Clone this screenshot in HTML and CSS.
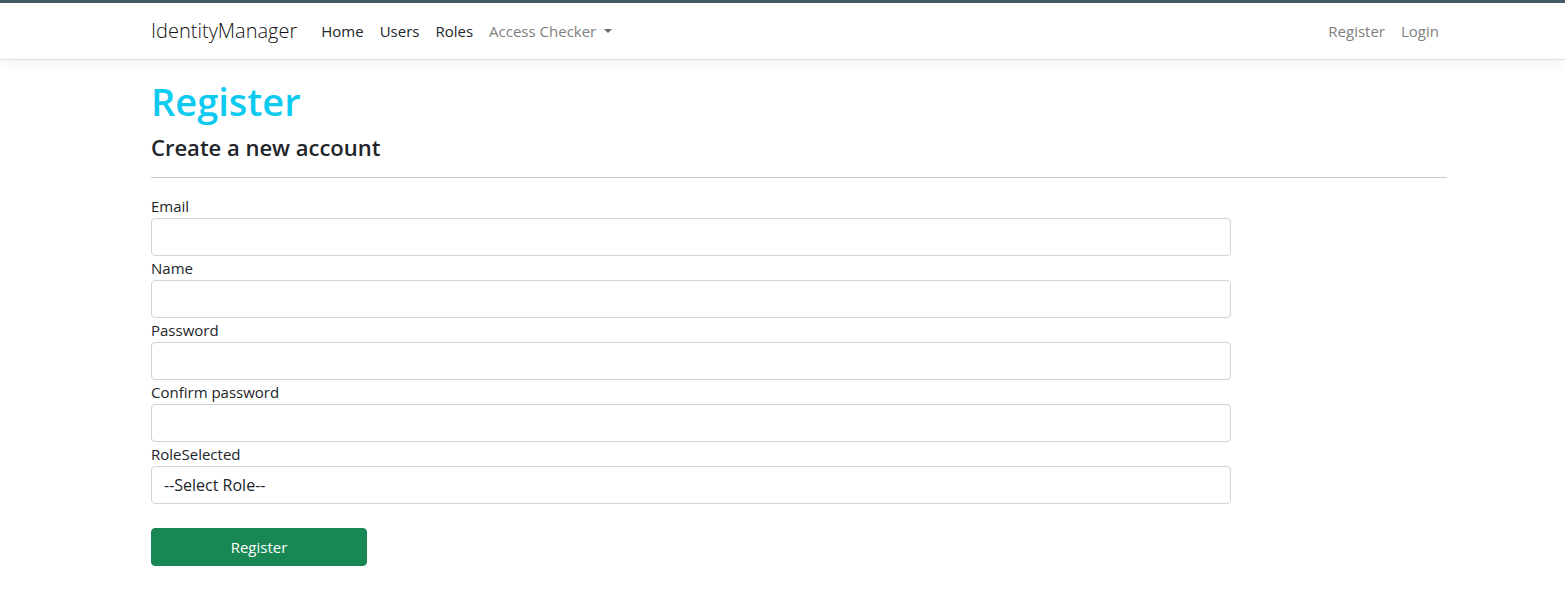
FILE: index.html
```html
<!DOCTYPE html>
<html lang="en">
<head>
<meta charset="utf-8">
<meta name="viewport" content="width=device-width, initial-scale=1">
<title>Register - IdentityManager</title>
<link rel="stylesheet" href="styles.css">
</head>
<body>
<header class="site-header">
  <nav class="navbar container">
    <a class="brand" href="#">IdentityManager</a>
    <ul class="nav nav-main">
      <li><a class="nav-link nav-dark" href="#">Home</a></li>
      <li><a class="nav-link nav-dark" href="#">Users</a></li>
      <li><a class="nav-link nav-dark" href="#">Roles</a></li>
      <li><a class="nav-link dropdown" href="#">Access Checker</a></li>
    </ul>
    <ul class="nav">
      <li><a class="nav-link" href="#">Register</a></li>
      <li><a class="nav-link" href="#">Login</a></li>
    </ul>
  </nav>
</header>
<main class="container">
  <h1 class="title">Register</h1>
  <form class="register-form">
    <h4 class="subtitle">Create a new account</h4>
    <hr class="rule">
    <div class="field">
      <label for="email">Email</label>
      <input class="control" id="email" type="email">
    </div>
    <div class="field">
      <label for="name">Name</label>
      <input class="control" id="name" type="text">
    </div>
    <div class="field">
      <label for="password">Password</label>
      <input class="control" id="password" type="password">
    </div>
    <div class="field">
      <label for="confirm">Confirm password</label>
      <input class="control" id="confirm" type="password">
    </div>
    <div class="field">
      <label for="role">RoleSelected</label>
      <select class="control control-select" id="role"><option>--Select Role--</option></select>
    </div>
    <button class="submit" type="submit">Register</button>
  </form>
</main>
</body>
</html>
```
FILE: styles.css
```css
*,
*::before,
*::after {
  box-sizing: border-box;
}

body {
  margin: 0;
  background: #fff;
  color: #212529;
  font-family: "Segoe UI", "Open Sans", "Noto Sans", sans-serif;
  font-size: 15px;
  line-height: 24px;
}

.container {
  width: 100%;
  max-width: 1353px;
  margin: 0 auto;
  padding: 0 12px 0 45px;
}

.site-header {
  border-top: 3px solid #455a64;
  border-bottom: 1px solid #dee2e6;
  box-shadow: 0 4px 12px rgba(0, 0, 0, 0.05);
  margin-bottom: 17px;
}

.navbar {
  display: flex;
  align-items: center;
  padding-top: 8px;
  padding-bottom: 8px;
}

.brand {
  margin-right: 16px;
  color: #111;
  font-size: 20px;
  font-weight: 300;
  line-height: 30px;
  text-decoration: none;
}

.nav {
  display: flex;
  margin: 0;
  padding: 0;
  list-style: none;
}

.nav-main {
  flex: 1;
}

.nav-link {
  display: block;
  padding: 8px;
  color: #808080;
  text-decoration: none;
}

.nav-dark {
  color: #212529;
}

.dropdown::after {
  content: "";
  display: inline-block;
  margin-left: 8px;
  vertical-align: 4px;
  border-top: 4px solid #666;
  border-left: 4px solid transparent;
  border-right: 4px solid transparent;
}

.title {
  margin: 0 0 8px;
  color: #0dcaf0;
  font-size: 38px;
  font-weight: 600;
  line-height: 48px;
}

.subtitle {
  margin: 0;
  font-size: 22px;
  font-weight: 600;
  line-height: 28px;
}

.rule {
  height: 1px;
  margin: 16px 0;
  border: 0;
  background: #c8c9ca;
}

.field {
  width: 83.3333%;
}

.field label {
  display: block;
}

.control {
  display: block;
  width: 100%;
  height: 38px;
  padding: 6px 12px;
  border: 1px solid #ced4da;
  border-radius: 4px;
  appearance: none;
  background: #fff;
  color: #212529;
  font: inherit;
}

.control-select {
  font-size: 16px;
}

.submit {
  display: block;
  width: 16.6667%;
  height: 38px;
  margin-top: 24px;
  border: 1px solid #198754;
  border-radius: 4px;
  background: #198754;
  color: #fff;
  font: inherit;
}
```
